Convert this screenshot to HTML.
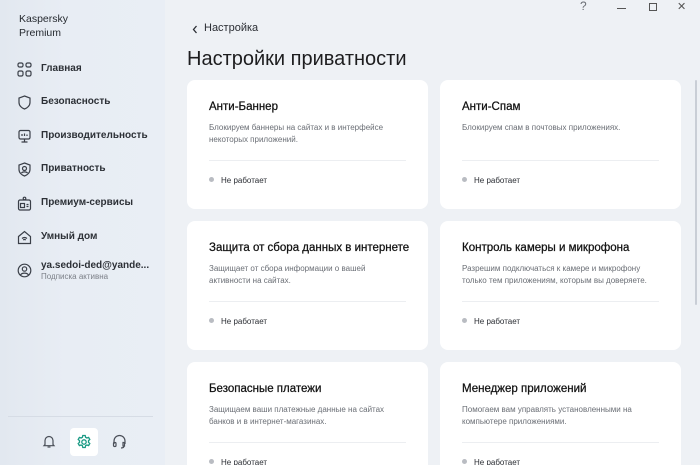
<!DOCTYPE html>
<html><head><meta charset="utf-8"><style>
*{margin:0;padding:0;box-sizing:border-box}
html{width:700px;height:465px;overflow:hidden}
body{width:700px;height:465px;overflow:hidden;background:#eef1f5;font-family:"Liberation Sans","Noto Sans CJK SC",sans-serif;position:relative;color:#1d1d1f}
.sb{position:absolute;left:0;top:0;width:165px;height:465px;background:linear-gradient(90deg,#e2e8f0 0%,#e8edf4 40%,#e9eef5 100%)}
.t{position:absolute;white-space:nowrap}
.nav{position:absolute;left:41px;font-size:10px;font-weight:bold;color:#2c3036}
.ic{position:absolute;left:17px;width:15px;height:15px}
.card{position:absolute;width:241px;height:129px;background:#fff;border-radius:8px;overflow:hidden}
.card.b{height:103px;border-radius:8px 8px 0 0}
.card h3{position:absolute;left:22px;top:21px;font-size:11.5px;font-weight:normal;color:#111;-webkit-text-stroke:0.25px #111;white-space:nowrap}
.card p{position:absolute;left:22px;top:42px;font-size:8px;line-height:12px;color:#6a6e75;width:186px}
.card .hr{position:absolute;left:22px;right:22px;top:80px;height:1px;background:#eceef1}
.card .st{position:absolute;left:22px;top:96px;font-size:8px;color:#2a2d33}
.card .st:before{content:"";display:inline-block;width:5px;height:5px;border-radius:50%;background:#b9bcc2;margin-right:7px;vertical-align:1px}
</style></head><body>
<div class="sb">
<div class="t" style="left:19px;top:12px;font-size:10.5px;line-height:14px;color:#262a30">Kaspersky<br>Premium</div>
<svg class="ic" style="top:62px" viewBox="0 0 15 15" fill="none" stroke="#3a3f48" stroke-width="1.2"><rect x="1" y="1" width="5" height="4" rx="1.5"/><rect x="9" y="1" width="5" height="4" rx="1.5"/><rect x="1" y="9" width="5" height="5" rx="1.5"/><rect x="9" y="9" width="5" height="5" rx="1.5"/></svg>
<div class="nav" style="top:63px">Главная</div>
<svg class="ic" style="top:95px" viewBox="0 0 15 15" fill="none" stroke="#3a3f48" stroke-width="1.2"><path d="M7.5 1L13 3v4.5c0 3-2.5 5.5-5.5 6.5C4.5 13 2 10.5 2 7.5V3z"/></svg>
<div class="nav" style="top:96px">Безопасность</div>
<svg class="ic" style="top:129px" viewBox="0 0 15 15" fill="none" stroke="#3a3f48" stroke-width="1.2"><rect x="2" y="1.5" width="11" height="8.5" rx="1.5"/><path d="M5 7V5M7.5 7V4.5M10 7V5.5M7.5 10v3M4.5 13h6"/></svg>
<div class="nav" style="top:130px">Производительность</div>
<svg class="ic" style="top:162px" viewBox="0 0 15 15" fill="none" stroke="#3a3f48" stroke-width="1.2"><path d="M7.5 1L13 3v4.5c0 3-2.5 5.5-5.5 6.5C4.5 13 2 10.5 2 7.5V3z"/><circle cx="7.5" cy="6.5" r="2"/><path d="M4.5 11c1-1.5 5-1.5 6 0"/></svg>
<div class="nav" style="top:163px">Приватность</div>
<svg class="ic" style="top:196px" viewBox="0 0 15 15" fill="none" stroke="#3a3f48" stroke-width="1.2"><rect x="1.5" y="4" width="12" height="10" rx="1.5"/><circle cx="7.5" cy="2.5" r="1.3"/><rect x="3.5" y="7.5" width="4" height="4"/><path d="M9.5 8.5h2M9.5 10.5h2"/></svg>
<div class="nav" style="top:197px">Премиум-сервисы</div>
<svg class="ic" style="top:230px" viewBox="0 0 15 15" fill="none" stroke="#3a3f48" stroke-width="1.2"><path d="M1.5 6.5L7.5 1.5l6 5V13.5h-12z"/><path d="M5 8.5c1.5-1.2 3.5-1.2 5 0M6.2 10c.8-.6 1.8-.6 2.6 0"/></svg>
<div class="nav" style="top:231px">Умный дом</div>
<svg class="ic" style="top:263px" viewBox="0 0 15 15" fill="none" stroke="#3a3f48" stroke-width="1.2"><circle cx="7.5" cy="7.5" r="6.3"/><circle cx="7.5" cy="6" r="2.2"/><path d="M3.5 12c1.5-2.5 6.5-2.5 8 0"/></svg>
<div class="nav" style="top:260px">ya.sedoi-ded@yande...</div>
<div class="t" style="left:41px;top:272px;font-size:8px;color:#7c8088">Подписка активна</div>
<div style="position:absolute;left:8px;width:145px;top:416px;height:1px;background:#d6dce5"></div>
<svg style="position:absolute;left:42px;top:434px" width="14" height="15" viewBox="0 0 14 15" fill="none" stroke="#4a4f58" stroke-width="1.2"><path d="M3 10.5V6.5a4 4 0 018 0v4l1 1.2H2z"/><path d="M5.5 13h3"/></svg>
<div style="position:absolute;left:70px;top:428px;width:28px;height:28px;background:#fff;border-radius:4px"></div>
<svg style="position:absolute;left:76px;top:434px" width="16" height="16" viewBox="0 0 16 16" fill="none" stroke="#1a9a84" stroke-width="1.3"><path d="M6.8 1.5h2.4l.4 1.8 1.3.7 1.7-.6 1.2 2.1-1.3 1.2v1.6l1.3 1.2-1.2 2.1-1.7-.6-1.3.7-.4 1.8H6.8l-.4-1.8-1.3-.7-1.7.6-1.2-2.1 1.3-1.2V6.7L2.2 5.5l1.2-2.1 1.7.6 1.3-.7z"/><circle cx="8" cy="8" r="2.2"/></svg>
<svg style="position:absolute;left:112px;top:434px" width="15" height="15" viewBox="0 0 15 15" fill="none" stroke="#4a4f58" stroke-width="1.2"><path d="M2 10V7a5.5 5.5 0 0111 0v3"/><rect x="1.5" y="8.5" width="2.5" height="4" rx="1"/><path d="M11 8.5h1.5v3.5H11zM12 12c0 1.5-1.5 2-3 2"/></svg>
</div>
<div class="t" style="left:580px;top:-1px;font-size:12px;color:#6a6e75">?</div>
<div style="position:absolute;left:617px;top:8px;width:9px;height:1px;background:#555"></div>
<div style="position:absolute;left:649px;top:3px;width:8px;height:8px;border:1px solid #555"></div>
<div class="t" style="left:677px;top:0px;font-size:11px;color:#555">✕</div>
<svg style="position:absolute;left:192px;top:25px" width="6" height="9" viewBox="0 0 6 9" fill="none" stroke="#2a2d33" stroke-width="1.3"><path d="M4.5 1L1.5 4.5 4.5 8"/></svg>
<div class="t" style="left:204px;top:22px;font-size:11px;color:#2a2d33">Настройка</div>
<div class="t" style="left:187px;top:48px;font-size:20px;color:#1d1d1f">Настройки приватности</div>
<div style="position:absolute;left:695px;top:80px;width:2px;height:225px;background:#c9ced6;border-radius:1px"></div>
<div class="card" style="left:187px;top:80px"><h3>Анти-Баннер</h3><p>Блокируем баннеры на сайтах и в интерфейсе некоторых приложений.</p><div class="hr"></div><div class="st">Не работает</div></div>
<div class="card" style="left:440px;top:80px"><h3>Анти-Спам</h3><p>Блокируем спам в почтовых приложениях.</p><div class="hr"></div><div class="st">Не работает</div></div>
<div class="card" style="left:187px;top:221px"><h3>Защита от сбора данных в интернете</h3><p>Защищает от сбора информации о вашей<br>активности на сайтах.</p><div class="hr"></div><div class="st">Не работает</div></div>
<div class="card" style="left:440px;top:221px"><h3>Контроль камеры и микрофона</h3><p style="width:205px">Разрешим подключаться к камере и микрофону<br>только тем приложениям, которым вы доверяете.</p><div class="hr"></div><div class="st">Не работает</div></div>
<div class="card b" style="left:187px;top:362px"><h3>Безопасные платежи</h3><p>Защищаем ваши платежные данные на сайтах<br>банков и в интернет-магазинах.</p><div class="hr"></div><div class="st">Не работает</div></div>
<div class="card b" style="left:440px;top:362px"><h3>Менеджер приложений</h3><p>Помогаем вам управлять установленными на<br>компьютере приложениями.</p><div class="hr"></div><div class="st">Не работает</div></div>
</body></html>
